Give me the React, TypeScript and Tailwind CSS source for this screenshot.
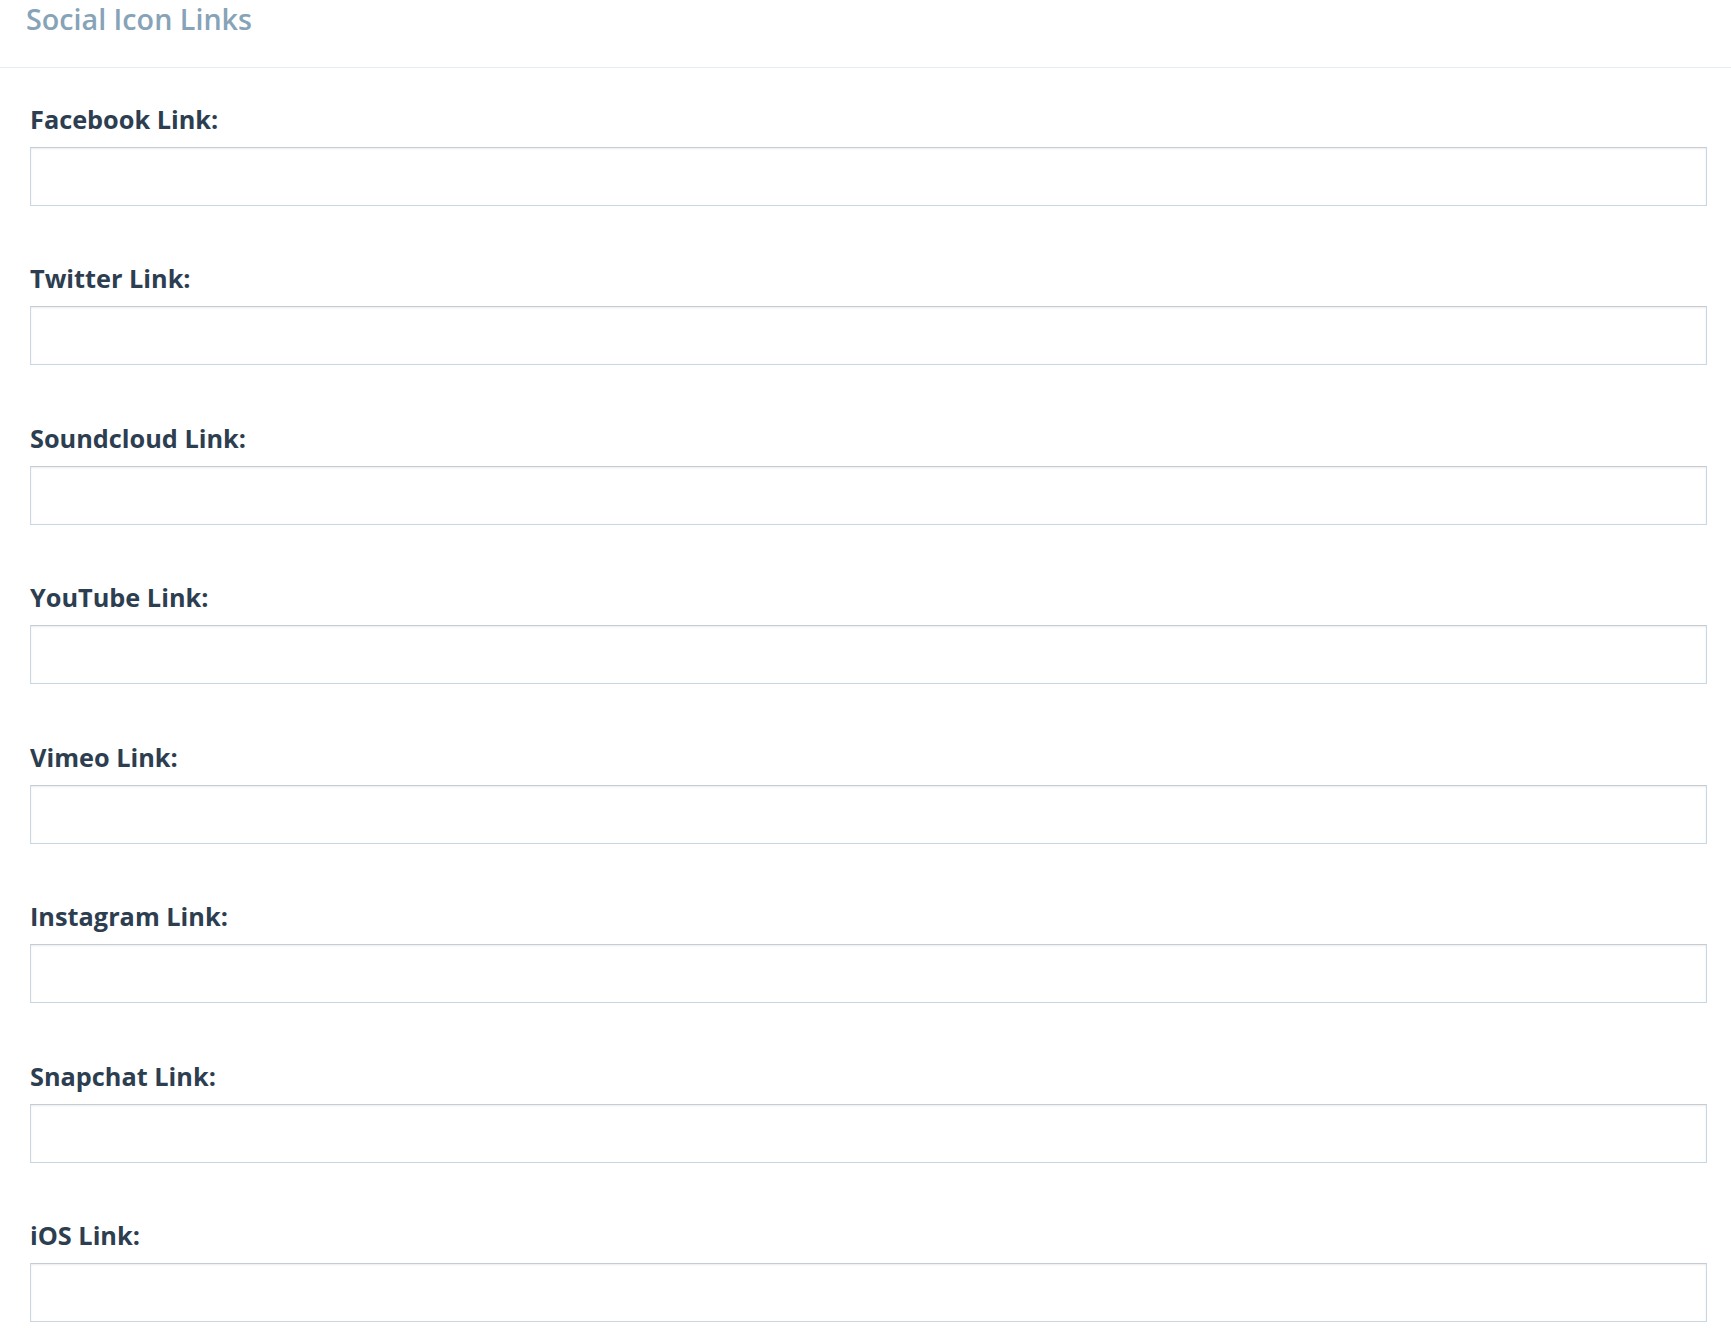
const fields = [
  "Facebook Link:",
  "Twitter Link:",
  "Soundcloud Link:",
  "YouTube Link:",
  "Vimeo Link:",
  "Instagram Link:",
  "Snapchat Link:",
  "iOS Link:",
];

export default function App() {
  return (
    <div className="min-h-screen bg-white font-['Open_Sans',sans-serif]">
      <div className="h-[68px] border-b border-[#e6edf2] pl-[26px]">
        <h2 className="text-[28.7px] leading-[38px] font-semibold text-[#87a3b8]">Social Icon Links</h2>
      </div>
      <div className="pl-[30px] pr-[24px] pt-[34px]">
        {fields.map((label) => (
          <div key={label} className="mb-[55.43px]">
            <label className="block text-[25.3px] leading-[34px] font-bold text-[#2c3e50]">{label}</label>
            <input
              type="text"
              className="mt-[11px] block h-[59px] w-full border border-[#c9d7e3] border-t-[#c6ccd2] bg-white shadow-[inset_0_1px_2px_rgba(0,0,0,0.08)] outline-none"
            />
          </div>
        ))}
      </div>
    </div>
  );
}
